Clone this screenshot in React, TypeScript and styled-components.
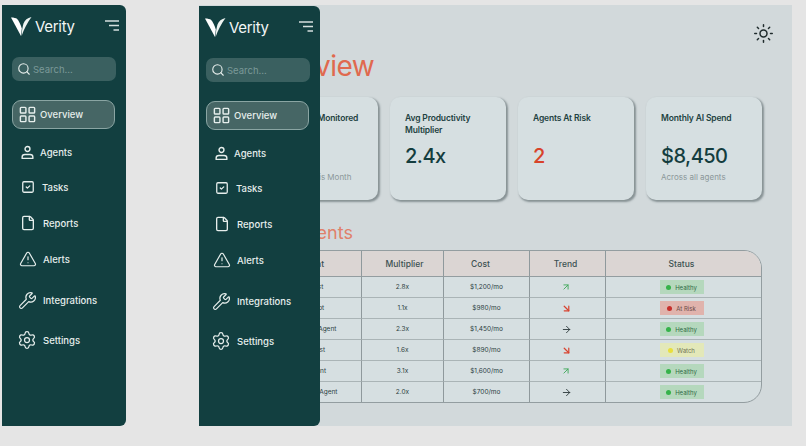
import { createGlobalStyle } from "styled-components";
import styled from "styled-components";
import {
  ArrowDownRight,
  ArrowRight,
  ArrowUpRight,
  File,
  LayoutGrid,
  Search,
  Settings,
  SquareCheck,
  Sun,
  TriangleAlert,
  Wrench,
} from "lucide-react";

const AgentIcon = ({ size }: { size: number }) => (
  <svg width={size} height={size} viewBox="0 0 14 14" fill="none" stroke="currentColor" strokeWidth="1.3">
    <circle cx="7" cy="3.7" r="2.3" />
    <path d="M2 12.500v-1.300c0-1.400 1.200-2.400 2.600-2.400h4.800c1.400 0 2.600 1 2.600 2.400v1.300z" strokeLinejoin="round" />
  </svg>
);

const navItems = [
  { label: "Overview", Icon: LayoutGrid, size: 19, stroke: 1.8, left: 5, gap: 3, top: 0, active: true },
  { label: "Agents", Icon: AgentIcon, size: 15, stroke: 2, left: 8, gap: 5, top: 11 },
  { label: "Tasks", Icon: SquareCheck, size: 14, stroke: 2.2, left: 9, gap: 7, top: 11 },
  { label: "Reports", Icon: File, size: 16, stroke: 2, left: 8, gap: 7, top: 12 },
  { label: "Alerts", Icon: TriangleAlert, size: 18, stroke: 1.6, left: 6.5, gap: 6.5, top: 12 },
  { label: "Integrations", Icon: Wrench, size: 19, stroke: 1.5, left: 5.5, gap: 6.5, top: 17 },
  { label: "Settings", Icon: Settings, size: 20, stroke: 1.5, left: 5, gap: 6, top: 16 },
];

const stats = [
  { title: "AI Agents Monitored", value: "18", note: "+4 New This Month" },
  { title: "Avg Productivity Multiplier", value: "2.4x" },
  { title: "Agents At Risk", value: "2", risk: true },
  { title: "Monthly AI Spend", value: "$8,450", note: "Across all agents" },
];

const rows = [
  { name: "Analyst", mult: "2.8x", cost: "$1,200/mo", trend: "up", status: "Healthy" },
  { name: "Chatbot", mult: "1.1x", cost: "$980/mo", trend: "down", status: "At Risk" },
  { name: "Research Agent", mult: "2.3x", cost: "$1,450/mo", trend: "flat", status: "Healthy" },
  { name: "Scientist", mult: "1.6x", cost: "$890/mo", trend: "down", status: "Watch" },
  { name: "Assistant", mult: "3.1x", cost: "$1,600/mo", trend: "up", status: "Healthy" },
  { name: "Marketing Agent", mult: "2.0x", cost: "$700/mo", trend: "flat", status: "Healthy" },
];

const SidebarBody = () => (
  <>
    <Brand>
      <svg width="21" height="19" viewBox="0 0 21 19">
        <path d="M0 .5c2.800 0 5 .5 6.200 1.500 1.800 1.700 3.300 5.500 4.600 9.500l-.8 7.500z" fill="#fff" />
        <path d="M20.500 0c-4.200 1-6.700 3-8 6.500-.9 3-1.700 7.500-1.900 12.500 2.300-6.800 5.600-13 9.900-19z" fill="#eef4f2" />
      </svg>
      <BrandName>Verity</BrandName>
      <MenuIcon width="14" height="11" viewBox="0 0 14 11" stroke="#d5e0de" strokeWidth="1.300">
        <path d="M0 1h14M4 5.500h10M8.500 10H14" />
      </MenuIcon>
    </Brand>
    <SearchBox>
      <Search size={14} strokeWidth={1.9} color="#e8efed" />
      <span>Search...</span>
    </SearchBox>
    <Nav>
      {navItems.map(({ label, Icon, size, stroke, left, gap, top, active }) => (
        <NavItem key={label} $left={left} $gap={gap} $top={top} $active={active}>
          <Icon size={size} strokeWidth={stroke} />
          <span>{label}</span>
        </NavItem>
      ))}
    </Nav>
  </>
);

const TrendIcon = ({ trend }: { trend: string }) => {
  if (trend === "up") return <ArrowUpRight size={10} color="#3fa85a" strokeWidth={2.2} />;
  if (trend === "down") return <ArrowDownRight size={11} color="#d8432f" strokeWidth={2.6} />;
  return <ArrowRight size={11} color="#2f3b3d" strokeWidth={2} />;
};

export default function App() {
  return (
    <Page>
      <GlobalStyle />
      <Sidebar $inset={9}>
        <SidebarBody />
      </Sidebar>
      <Stage>
        <TopBar>
          <Sun size={21} color="#1f2b2c" strokeWidth={1.7} />
        </TopBar>
        <Title>Overview</Title>
        <Cards>
          {stats.map((s) => (
            <Card key={s.title}>
              <CardTitle>{s.title}</CardTitle>
              <CardValue $risk={s.risk}>{s.value}</CardValue>
              {s.note && <CardNote>{s.note}</CardNote>}
            </Card>
          ))}
        </Cards>
        <SectionTitle>Top Agents</SectionTitle>
        <Table>
          <thead>
            <tr>
              <th>Agent</th>
              <th>Multiplier</th>
              <th>Cost</th>
              <th>Trend</th>
              <th>Status</th>
            </tr>
          </thead>
          <tbody>
            {rows.map((r) => (
              <tr key={r.name}>
                <td>{r.name}</td>
                <td>{r.mult}</td>
                <td>{r.cost}</td>
                <td>
                  <TrendCell>
                    <TrendIcon trend={r.trend} />
                  </TrendCell>
                </td>
                <td>
                  <Badge $status={r.status}>
                    <i />
                    {r.status}
                  </Badge>
                </td>
              </tr>
            ))}
          </tbody>
        </Table>
        <Overlay>
          <Sidebar $inset={6}>
            <SidebarBody />
          </Sidebar>
        </Overlay>
      </Stage>
    </Page>
  );
}

const GlobalStyle = createGlobalStyle`
  html, body {
    margin: 0;
    background: #e5e5e5;
    font-family: "Inter", "Noto Sans", sans-serif;
  }
`;

const Page = styled.div`
  display: flex;
  height: 446px;
  box-sizing: border-box;
  padding: 5px 0 20px 2px;
  gap: 73px;
  overflow: hidden;
`;

const Sidebar = styled.aside<{ $inset: number }>`
  flex: 0 0 auto;
  box-sizing: border-box;
  width: ${(p) => 115 + p.$inset}px;
  height: 100%;
  padding: 12px 7px 0 ${(p) => p.$inset}px;
  background: #123f40;
  border-radius: 0 6px 6px 0;
  color: #e6eeec;
`;

const Brand = styled.div`
  display: flex;
  align-items: center;
  height: 19px;
  gap: 3px;
`;

const BrandName = styled.span`
  font-size: 15px;
  letter-spacing: -0.3px;
  margin-top: -1px;
  color: #f2f6f5;
`;

const MenuIcon = styled.svg`
  margin-left: auto;
  margin-top: -2px;
`;

const SearchBox = styled.div`
  display: flex;
  align-items: center;
  gap: 2px;
  height: 24px;
  width: 104px;
  box-sizing: border-box;
  margin: 21px 0 19px 1px;
  padding-left: 5px;
  border-radius: 7px;
  background: #3a6060;
  font-size: 9.500px;
  color: #7b9998;
`;

const Nav = styled.nav`
  display: flex;
  flex-direction: column;
`;

const NavItem = styled.a<{ $left: number; $gap: number; $top: number; $active?: boolean }>`
  display: flex;
  align-items: center;
  box-sizing: border-box;
  width: 103px;
  height: ${(p) => (p.$active ? 29 : 24)}px;
  margin: ${(p) => p.$top}px 0 0 1px;
  padding-left: ${(p) => p.$left}px;
  gap: ${(p) => p.$gap}px;
  font-size: 9.500px;
  font-weight: 500;
  border-radius: 9px;
  border: ${(p) => (p.$active ? "1px solid #8aa5a3" : "none")};
  background: ${(p) => (p.$active ? "#466665" : "transparent")};

  svg {
    flex: none;
  }
`;

const Stage = styled.main`
  position: relative;
  flex: 0 0 593px;
  box-sizing: border-box;
  padding: 18px 30px 0 63px;
  background: #d2d9db;
  overflow: hidden;
`;

const Overlay = styled.div`
  position: absolute;
  left: 0;
  top: 1px;
  bottom: 0;
`;

const TopBar = styled.div`
  display: flex;
  justify-content: flex-end;
  height: 21px;
  margin-right: -12px;
`;

const Title = styled.h1`
  margin: 0 0 0 -9px;
  height: 44px;
  font-size: 28px;
  line-height: 44px;
  font-weight: 400;
  letter-spacing: -0.5px;
  color: #e0694e;
`;

const Cards = styled.div`
  display: grid;
  grid-template-columns: repeat(4, 116px);
  justify-content: space-between;
  margin-top: 9px;
`;

const Card = styled.section`
  box-sizing: border-box;
  height: 103px;
  padding: 16px 15px 0;
  border-radius: 10px;
  background: #d6dfe1;
  box-shadow: 1.500px 1.500px 2px rgba(85, 98, 102, 0.6);
`;

const CardTitle = styled.div`
  min-height: 25px;
  font-size: 8.500px;
  line-height: 11.500px;
  font-weight: 600;
  letter-spacing: -0.15px;
  color: #1e4242;
`;

const CardValue = styled.div<{ $risk?: boolean }>`
  margin-top: 6px;
  font-size: 20px;
  line-height: 24px;
  font-weight: 500;
  letter-spacing: -0.5px;
  color: ${(p) => (p.$risk ? "#d8432a" : "#143d3e")};
`;

const CardNote = styled.div`
  margin-top: 4px;
  font-size: 8px;
  color: #8b9799;
`;

const SectionTitle = styled.h2`
  margin: 22px 0 0 -6px;
  height: 22px;
  font-size: 18px;
  line-height: 22px;
  font-weight: 400;
  color: #e0806a;
`;

const Table = styled.table`
  width: 500px;
  margin-top: 6px;
  table-layout: fixed;
  border-collapse: separate;
  border-spacing: 0;
  border: 1px solid #939da0;
  border-radius: 0 18px 18px 0;
  overflow: hidden;
  background: #d6dfe1;
  color: #2d4142;

  th {
    box-sizing: border-box;
    height: 26px;
    padding: 0;
    font-size: 8.500px;
    font-weight: 500;
    color: #3c5152;
    background: #dbd5d3;
    border-bottom: 1px solid #939da0;
  }

  td {
    height: 20px;
    padding: 0;
    text-align: center;
    font-size: 6.500px;
    border-top: 1px solid #aab4b6;
  }

  tbody tr:first-child td {
    border-top: 0;
  }

  th:nth-child(1) { width: 99px; }
  th:nth-child(2) { width: 82px; padding-left: 4px; }
  th:nth-child(3) { width: 86px; padding-right: 12px; }
  th:nth-child(4) { width: 76px; padding-right: 4px; }
  th:nth-child(5),
  td:nth-child(5) { padding-right: 4px; }
  td:nth-child(4) { padding-right: 3px; }

  th:not(:last-child),
  td:not(:last-child) {
    border-right: 1px solid #8f999c;
  }
`;

const TrendCell = styled.div`
  display: flex;
  justify-content: center;
`;

const badgeColors: Record<string, { bg: string; dot: string; fg: string }> = {
  Healthy: { bg: "#b5d8bd", dot: "#35b34a", fg: "#2f6a45" },
  "At Risk": { bg: "#e0b3ac", dot: "#c62f2b", fg: "#6b4a47" },
  Watch: { bg: "#e3e8b9", dot: "#e9df3c", fg: "#6f7455" },
};

const Badge = styled.div<{ $status: string }>`
  display: inline-flex;
  align-items: center;
  justify-content: center;
  gap: 4px;
  width: 44px;
  height: 14px;
  vertical-align: middle;
  font-size: 6px;
  color: ${(p) => badgeColors[p.$status].fg};
  background: ${(p) => badgeColors[p.$status].bg};

  i {
    width: 5px;
    height: 5px;
    border-radius: 50%;
    background: ${(p) => badgeColors[p.$status].dot};
  }
`;
